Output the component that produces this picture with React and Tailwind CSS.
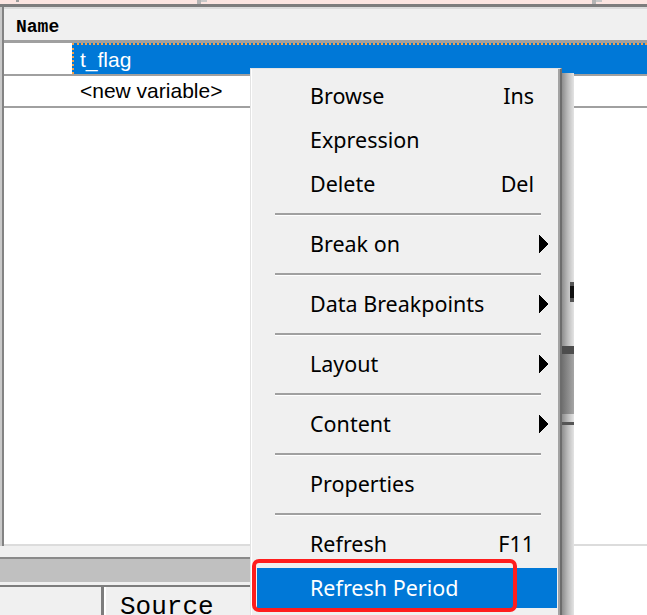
import React from "react";

const menuItems = [
  { label: "Browse", shortcut: "Ins" },
  { label: "Expression" },
  { label: "Delete", shortcut: "Del" },
  "sep",
  { label: "Break on", sub: true },
  "sep",
  { label: "Data Breakpoints", sub: true },
  "sep",
  { label: "Layout", sub: true },
  "sep",
  { label: "Content", sub: true },
  "sep",
  { label: "Properties" },
  "sep",
  { label: "Refresh", shortcut: "F11" },
  { label: "Refresh Period", active: true },
];

function SubArrow() {
  return (
    <svg width="10" height="18" viewBox="0 0 10 18" shapeRendering="crispEdges">
      <polygon points="0,0 10,9 0,18" fill="#000" />
    </svg>
  );
}

function ContextMenu() {
  return (
    <div className="absolute left-[250px] top-[68px] flex">
      <div className="w-[312px] h-[560px] bg-[#f0f0f0] border-l border-t border-[#e3e3e3] border-r-2 border-r-[#6d6d6d]">
        <div className="h-full border-l border-white border-r-2 border-r-[#a3a3a3] pt-[5px]">
          {menuItems.map((item, i) =>
            item === "sep" ? (
              <div key={i} className="h-[16px] pt-[7px] pl-[23px] pr-[17px]">
                <div className="h-[2px] bg-[#a0a0a0]" />
                <div className="h-[1px] bg-white" />
              </div>
            ) : (
              <div key={i} className="h-[44px] py-[2px] pl-[5px] pr-[1px]">
                <div
                  className={
                    "h-full flex items-center pl-[53px] pr-[8px] " +
                    (item.active ? "bg-[#0078d7] text-white" : "text-black")
                  }
                >
                  <span className="flex-1">{item.label}</span>
                  {item.shortcut && <span>{item.shortcut}</span>}
                  <span className="w-[15px] flex justify-end">
                    {item.sub && <SubArrow />}
                  </span>
                </div>
              </div>
            )
          )}
        </div>
      </div>
      {/* drop shadow, with the window behind showing through */}
      <div className="w-[12px] mt-[5px] h-[560px] flex flex-col bg-gradient-to-r from-[#8e8e8e] via-[#bdbdbd] to-[#e4e4e4]">
        <div className="h-[209px]" />
        <div className="h-[20px] flex justify-end">
          <div className="w-[4px] bg-[#111] border-y-4 border-[#555]" />
        </div>
        <div className="h-[44px]" />
        <div className="h-[8px] bg-[#4d4d4d]" />
        <div className="h-[60px] bg-gradient-to-r from-[#707070] to-[#a6a6a6]" />
        <div className="h-[8px]" />
        <div className="h-[3px] bg-[#555]" />
      </div>
      {/* annotation box */}
      <div className="absolute left-[2px] top-[491px] w-[265px] h-[53px] border-4 border-[#ff1d1d] rounded-[7px]" />
    </div>
  );
}

export default function App() {
  return (
    <div className="relative w-[647px] h-[615px] overflow-hidden bg-white font-['Noto_Sans',sans-serif] text-[21.5px]">
      {/* strip of the pane above */}
      <div className="h-[4px] bg-[#fbe5e1] flex items-start">
        <div className="ml-[16px] w-[3px] h-[2px] bg-[#9c9c9c]" />
        <div className="ml-[178px] w-[4px] h-[4px] bg-[#b4b4b4]" />
        <div className="w-[6px] h-[2px] bg-[#c8c8c8]" />
        <div className="ml-[385px] w-[4px] h-[4px] bg-[#b4b4b4]" />
        <div className="w-[6px] h-[2px] bg-[#c8c8c8]" />
      </div>
      <div className="h-[3px] bg-[#7d7d7d]" />

      {/* watch list panel */}
      <div className="flex h-[539px]">
        <div className="w-[2px] bg-[#c9c9c9]" />
        <div className="w-[2px] bg-[#838383]" />
        <div className="flex-1 flex flex-col">
          <div className="h-[2px] bg-[#dcdcdc]" />
          <div className="h-[31px] bg-[#f0f0f0] flex items-center pl-[12px] pt-[5px] font-['Liberation_Mono',monospace] font-bold text-[18px] text-black">
            Name
          </div>
          <div className="h-[3px] bg-[#a0a0a0]" />
          <div className="h-[31px] flex">
            <div className="w-[68px] bg-white" />
            <div className="flex-1 bg-[#0078d7] border-t-2 border-l-2 border-dotted border-[#f5a04a] flex items-center pl-[6px] text-white font-['Liberation_Sans',sans-serif] text-[21px]">
              t_flag
            </div>
          </div>
          <div className="h-[2px] bg-[#a0a0a0]" />
          <div className="h-[30px] flex items-center pl-[76px] text-black font-['Liberation_Sans',sans-serif] text-[21px]">
            &lt;new variable&gt;
          </div>
          <div className="h-[2px] bg-[#a0a0a0]" />
          <div className="flex-1 bg-white" />
          <div className="h-[2px] bg-[#dcdcdc]" />
        </div>
      </div>

      {/* lower pane */}
      <div className="flex">
        <div className="w-[574px] flex flex-col">
          <div className="h-[11px] bg-[#f0f0f0]" />
          <div className="h-[2px] bg-[#8a8a8a]" />
          <div className="h-[23px] bg-[#c0c0c0]" />
          <div className="h-[3px] bg-[#f0f0f0]" />
          <div className="h-[2px] bg-[#7d7d7d]" />
          <div className="h-[28px] bg-[#f0f0f0] flex">
            <div className="w-[101px]" />
            <div className="w-[3px] bg-[#7d7d7d]" />
            <div className="w-[2px] bg-white" />
            <div className="pl-[14px] pt-[7px] font-['Liberation_Mono',monospace] text-[26px] leading-none text-black">
              Source
            </div>
          </div>
        </div>
        <div className="flex-1 bg-white" />
      </div>

      <ContextMenu />
    </div>
  );
}
